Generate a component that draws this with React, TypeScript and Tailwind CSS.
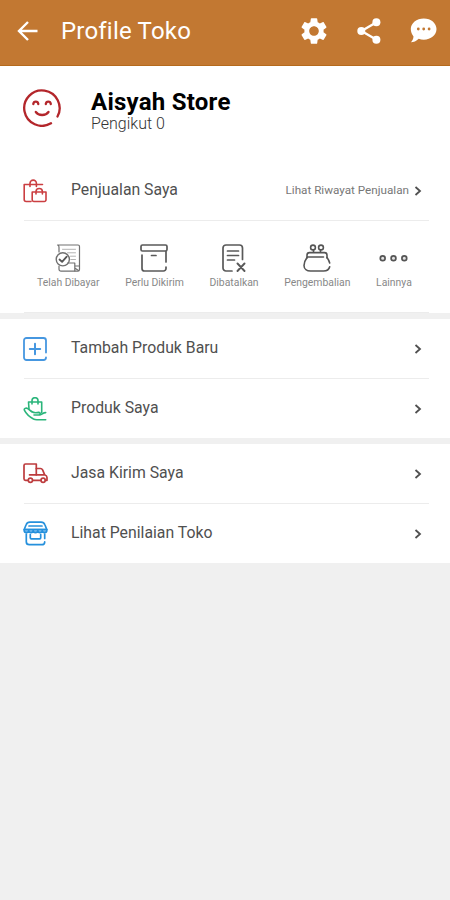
import type { ReactNode } from 'react'

// ── Icons ────────────────────────────────────────────
const BackIcon = () => (
  <svg width="22" height="22" viewBox="0 0 22 22" fill="none" stroke="#fff" strokeWidth="2.4">
    <path d="M20.5 11H2.5M11 2L2 11l9 9" />
  </svg>
)

const GearIcon = () => (
  <svg width="32" height="32" viewBox="0 0 24 24" fill="#fff">
    <path d="M19.14 12.94c.04-.3.06-.61.06-.94 0-.32-.02-.64-.07-.94l2.03-1.58c.18-.14.23-.41.12-.61l-1.92-3.32c-.12-.22-.37-.29-.59-.22l-2.39.96c-.5-.38-1.03-.7-1.62-.94l-.36-2.54c-.04-.24-.24-.41-.48-.41h-3.84c-.24 0-.43.17-.47.41l-.36 2.54c-.59.24-1.13.57-1.62.94l-2.39-.96c-.22-.08-.47 0-.59.22L2.74 8.87c-.12.21-.08.47.12.61l2.03 1.58c-.05.3-.09.63-.09.94s.02.64.07.94l-2.03 1.58c-.18.14-.23.41-.12.61l1.92 3.32c.12.22.37.29.59.22l2.39-.96c.5.38 1.03.7 1.62.94l.36 2.54c.05.24.24.41.48.41h3.84c.24 0 .44-.17.47-.41l.36-2.54c.59-.24 1.13-.56 1.62-.94l2.39.96c.22.08.47 0 .59-.22l1.92-3.32c.12-.22.07-.47-.12-.61l-2.01-1.58zM12 15.600c-1.980 0-3.600-1.620-3.600-3.600s1.620-3.600 3.600-3.600 3.600 1.620 3.600 3.600-1.620 3.600-3.600 3.600z" />
  </svg>
)

const ShareIcon = () => (
  <svg width="24" height="26" viewBox="0 0 24 26" fill="#fff">
    <path d="M19.5 4.2L4.5 13l15 8.8" fill="none" stroke="#fff" strokeWidth="2.4" />
    <circle cx="19.4" cy="4.3" r="4" />
    <circle cx="4.3" cy="13" r="4" />
    <circle cx="19.4" cy="21.7" r="4" />
  </svg>
)

const ChatIcon = () => (
  <svg width="27" height="25" viewBox="0 0 27 25">
    <path d="M13.8.5C21 .5 26.5 5.2 26.5 11.1S21 21.7 13.8 21.7c-1.8 0-3.6-.3-5.1-.9C6.3 23.3 3.6 24.3.8 24.3c1.5-1.5 2.6-3.300 2.700-5.900C1.900 16.400.8 13.900.8 11.100.8 5.200 6.600.5 13.800.5z" fill="#fff" />
    <g fill="#c27832">
      <circle cx="8.3" cy="11" r="1.4" />
      <circle cx="13.7" cy="11" r="1.4" />
      <circle cx="19.1" cy="11" r="1.4" />
    </g>
  </svg>
)

const SmileIcon = () => (
  <svg width="38" height="38" viewBox="0 0 38 38" fill="none" stroke="#b3262b" strokeWidth="2.3" strokeLinecap="round">
    <path d="M28 34.3A17.7 17.7 0 1 1 34.5 27.5" />
    <path d="M10.3 15c.4-3.2 4.6-3.2 5 0M22.8 15c.4-3.2 4.6-3.2 5 0M12.8 23c2.8 4 9.9 4 12.7 0" />
  </svg>
)

const BagsIcon = () => (
  <svg width="24" height="24" viewBox="0 0 24 24" fill="none" stroke="#cb3f42" strokeWidth="1.6" strokeLinecap="round" strokeLinejoin="round">
    <path d="M8 22.5H3.2a2 2 0 0 1-2-2V5.5H19.5" />
    <path d="M7 7.5V4.3a3.2 3.2 0 0 1 6.4 0v3.2" />
    <path d="M9.2 13H23v7.8a1.7 1.7 0 0 1-1.7 1.7H10.9a1.7 1.7 0 0 1-1.7-1.7z" />
    <path d="M13 15v-2.300a3.200 3.200 0 0 1 6.400 0V15" />
  </svg>
)

const AddIcon = () => (
  <svg width="24" height="24" viewBox="0 0 24 24" fill="none" stroke="#4697e0" strokeWidth="1.8" strokeLinecap="round">
    <path d="M23 15.5V3.5A2.5 2.5 0 0 0 20.5 1h-17A2.5 2.5 0 0 0 1 3.5v17A2.5 2.5 0 0 0 3.5 23h17c1.5 0 2.5-1 2.5-2.5" />
    <path d="M12 6.8v10.4M6.8 12h10.4" strokeWidth="2" />
  </svg>
)

const HandBagIcon = () => (
  <svg width="24" height="24" viewBox="0 0 24 24" fill="none" stroke="#2bb57b" strokeWidth="1.6" strokeLinecap="round" strokeLinejoin="round">
    <path d="M6 12L5.500 5H18.700v10.500M9 7V3.700a3 3 0 0 1 6 0V7" />
    <path d="M8.5 14.5L4.8 11.6c-1.8-1.2-4.2 0-3.3 1.8 1.6 3.2 4.7 6.3 9 8.6 1.2.6 2 .7 3.3.7h8.9" />
    <path d="M8.5 14.5c2 1.5 4.7 1.5 7.2.9 2 0 2 2.300 0 2.600H11M16.500 18c1.900-.4 3.800-2.400 6.200-2.400" />
  </svg>
)

const TruckIcon = () => (
  <svg width="25" height="21" viewBox="0 0 25 21" fill="none" stroke="#bd3c3e" strokeWidth="1.7" strokeLinecap="round" strokeLinejoin="round">
    <path d="M5 17.3H2.5A1.5 1.5 0 0 1 1 15.8V2.5A1.5 1.5 0 0 1 2.5 1h10.8v10.8H6.5" />
    <path d="M13.3 5.5h4.2c1 0 1.6.4 2.1 1.300l2.100 5H13.300M21.700 11.800c1.400.5 2.300 1.500 2.300 2.700v2.800h-1.500M9.800 17.300h8" />
    <circle cx="7.4" cy="17.3" r="2.1" />
    <circle cx="20.1" cy="17.3" r="2.1" />
  </svg>
)

const StoreIcon = () => (
  <svg width="25" height="25" viewBox="0 0 25 25" fill="none" stroke="#2590dc" strokeWidth="1.7" strokeLinecap="round" strokeLinejoin="round">
    <path d="M1.2 8.500L3 4C3.700 2 5 1.100 7 1.100h11c2 0 3.300.9 4 2.900l1.800 4.500zM6 5h13" />
    <path d="M1.200 8.500v1c0 2.800 4.500 2.800 4.500 0 0 2.800 4.500 2.800 4.500 0 0 2.800 4.600 2.800 4.600 0 0 2.800 4.500 2.800 4.500 0 0 2.800 4.500 2.800 4.500 0v-1z" fill="#79bdf0" />
    <path d="M3.300 13v7.700c0 2 1 3 3 3h12.400c2 0 3-1 3-2.800M21.700 13v4.500" />
    <path d="M7.300 13.500v3.300c0 .7.400 1 1 1h8.400c.6 0 1-.3 1-1v-3.300" />
  </svg>
)

const PaidIcon = () => (
  <svg width="26" height="28" viewBox="0 0 26 28" fill="none" stroke="#707070" strokeWidth="1.2" strokeLinecap="round" strokeLinejoin="round">
    <path d="M4 8V3.500C4 2 3.500 1 2.500 1H23c1 0 1.500.6 1.500 1.500V25.500c0 1-.7 1.700-1.700 1.700H6a2 2 0 0 1-2-2V22" />
    <path d="M7.500 5.300h13M12.500 8.800h8M15.500 12.200h5M15.800 15.500h4.700" strokeWidth=".9" stroke="#aaa" />
    <path d="M12.500 19h7.300v8M19.800 22h4.200M20.500 24.500l3 2" />
    <circle cx="7.8" cy="15.3" r="6.6" strokeWidth="1.4" />
    <path d="M4.500 15.500l2.600 2.400 4.600-5.200" strokeWidth="1.8" stroke="#555" />
  </svg>
)

const BoxIcon = () => (
  <svg width="28" height="28" viewBox="0 0 28 28" fill="none" stroke="#595959" strokeWidth="1.7" strokeLinecap="round" strokeLinejoin="round">
    <rect x="1" y="1" width="26" height="6" rx="1.5" />
    <path d="M2 11v13.5a2.5 2.5 0 0 0 2.5 2.5h19a2.5 2.5 0 0 0 2.500-2.500V23M26 7.500V18M11.500 11.500h4.500" />
  </svg>
)

const CancelIcon = () => (
  <svg width="24" height="28" viewBox="0 0 24 28" fill="none" stroke="#595959" strokeWidth="1.7" strokeLinecap="round" strokeLinejoin="round">
    <path d="M10 27H4a3 3 0 0 1-3-3V4a3 3 0 0 1 3-3h13.5a3 3 0 0 1 3 3v11.5" />
    <path d="M5.5 7h11M5.5 11.5h11M5.5 16h7" />
    <path d="M15.5 19.5l7 7.500M22.500 19.500l-7 7.500" strokeWidth="1.9" />
  </svg>
)

const PurseIcon = () => (
  <svg width="28" height="28" viewBox="0 0 28 28" fill="none" stroke="#555" strokeWidth="1.6" strokeLinecap="round" strokeLinejoin="round">
    <circle cx="10" cy="3.5" r="2.4" />
    <circle cx="18" cy="3.5" r="2.4" />
    <path d="M10.5 6v2.500M17.500 6v2.500M4 14V11.200C4 9.500 5 8.600 6.500 8.600h15c1.500 0 2.500.9 2.500 2.600V14M4 13h16.500" />
    <path d="M4 13.500c-1.800 2.500-3 5.500-3 8C1 25 4 27 7.500 27h13c3.200 0 5.500-1.500 6.200-4.300M24 13.500c1.300 1.700 2.200 3.600 2.700 5.500" />
  </svg>
)

const MoreIcon = () => (
  <svg width="29" height="28" viewBox="0 0 29 28" fill="#e4e4e4" stroke="#555" strokeWidth="1.7">
    <circle cx="3.7" cy="14.3" r="2.4" />
    <circle cx="14.5" cy="14.3" r="2.4" />
    <circle cx="25.3" cy="14.3" r="2.4" />
  </svg>
)

const Chevron = () => (
  <svg width="8" height="10" viewBox="0 0 8 10" fill="none" stroke="#505050" strokeWidth="1.8">
    <path d="M1.5 1l4.5 4-4.5 4" />
  </svg>
)

// ── Parts ────────────────────────────────────────────
const STATUSES = [
  { label: 'Telah Dibayar', icon: <PaidIcon /> },
  { label: 'Perlu Dikirim', icon: <BoxIcon /> },
  { label: 'Dibatalkan', icon: <CancelIcon /> },
  { label: 'Pengembalian', icon: <PurseIcon /> },
  { label: 'Lainnya', icon: <MoreIcon /> },
]

function MenuRow({ icon, label, note }: { icon: ReactNode; label: string; note?: string }) {
  return (
    <button className="flex h-[59px] w-full items-center pr-7 pl-[23px] text-left">
      <span className="flex w-12 shrink-0">{icon}</span>
      <span className="flex-1 pb-px text-[15.8px] text-[#505050]">{label}</span>
      {note && <span className="mr-[5px] text-[11.7px] text-[#777]">{note}</span>}
      <Chevron />
    </button>
  )
}

const Divider = () => <div className="mr-[21px] ml-6 h-px bg-[#ececec]" />

export default function App() {
  return (
    <div className="min-h-[900px] w-[450px] bg-[#f0f0f0] font-[Roboto,sans-serif]">
      {/* Header */}
      <header className="flex h-[66px] items-center border-b border-[#b56a1c] bg-[#c27832] pr-[13px] pb-1 pl-[17px]">
        <button><BackIcon /></button>
        <h1 className="ml-[22px] flex-1 text-2xl tracking-[0.2px] text-white">Profile Toko</h1>
        <div className="flex items-center">
          <button className="mr-[27px]"><GearIcon /></button>
          <button className="mr-[29px]"><ShareIcon /></button>
          <button><ChatIcon /></button>
        </div>
      </header>

      {/* Store */}
      <section className="bg-white">
        <div className="flex h-[95px] pt-[23px] pl-[23px]">
          <SmileIcon />
          <div className="ml-[30px]">
            <h2 className="text-[24px] leading-[26px] font-bold tracking-[0.25px] text-black">Aisyah Store</h2>
            <p className="text-base leading-[18px] font-light text-[#333]">Pengikut 0</p>
          </div>
        </div>

        <MenuRow icon={<BagsIcon />} label="Penjualan Saya" note="Lihat Riwayat Penjualan" />
        <Divider />
        <div className="flex h-[91px] gap-[25.7px] pt-[23px] pl-[37px]">
          {STATUSES.map((s) => (
            <button key={s.label} className="flex shrink-0 flex-col items-center">
              {s.icon}
              <span className="mt-1 text-[10.4px] leading-[14px] text-[#888]">{s.label}</span>
            </button>
          ))}
        </div>
        <Divider />
      </section>

      {/* Products */}
      <section className="mt-1.5 bg-white">
        <MenuRow icon={<AddIcon />} label="Tambah Produk Baru" />
        <Divider />
        <MenuRow icon={<HandBagIcon />} label="Produk Saya" />
      </section>

      {/* Delivery and reviews */}
      <section className="mt-1.5 bg-white">
        <MenuRow icon={<TruckIcon />} label="Jasa Kirim Saya" />
        <Divider />
        <MenuRow icon={<StoreIcon />} label="Lihat Penilaian Toko" />
      </section>
    </div>
  )
}
